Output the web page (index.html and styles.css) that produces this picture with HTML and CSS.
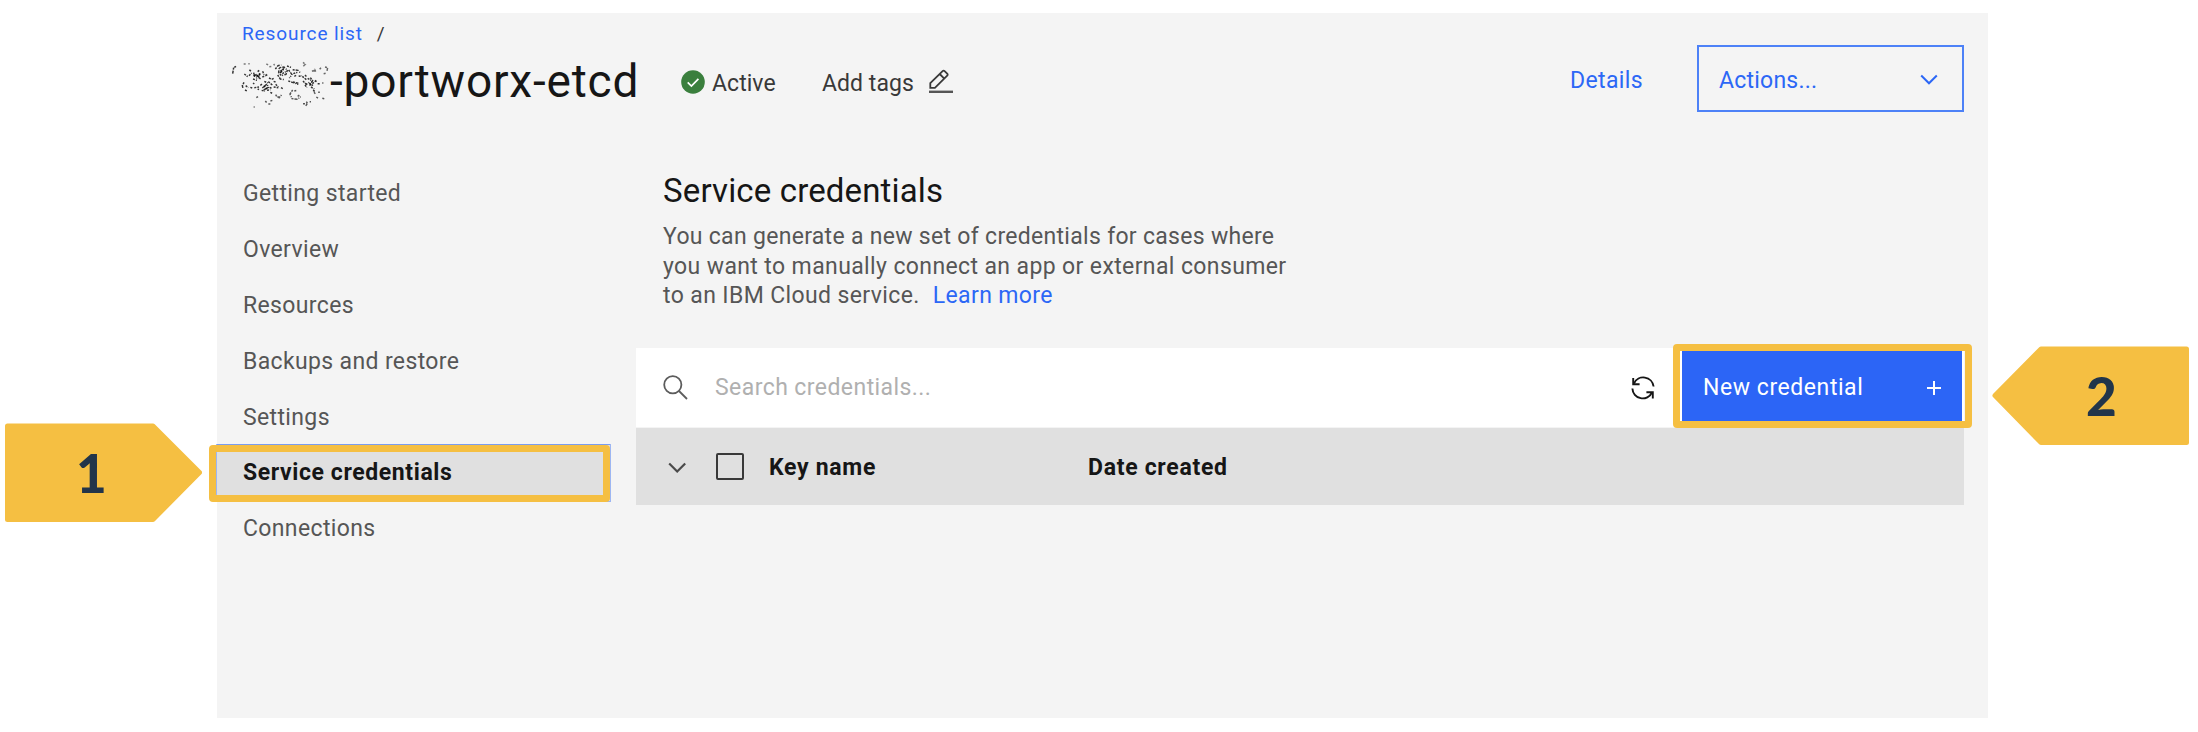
FILE: index.html
```html
<!DOCTYPE html>
<html lang="en">
<head>
<meta charset="utf-8">
<title>Service credentials</title>
<link rel="stylesheet" href="styles.css">
</head>
<body>
<div class="stage">
  <div class="panel">
    <header class="header">
      <nav class="crumbs"><a class="link crumb">Resource list</a><span class="slash">/</span></nav>
      <div class="title-row">
        <svg class="redacted" width="105" height="60" viewBox="0 0 315 180" fill="none" stroke="#333" stroke-width="4.4" stroke-dasharray="6 3 9 4 3 3">
          <path d="M26 38l-3 18M33 34l-6 4" stroke-width="4.5"/>
          <path d="M56 27h8M70 26h4M124 27l6 3M133 35l8-1M146 27l3 4M234 22l7 6l-6 6" stroke="#777"/>
          <path d="M58 57l10 8M72 62l8-8M78 48l-5-3M86 53l2 9l7-4M84 72l12 4M98 50l6-5M104 56l-2 12l8 6M113 49l4 10M112 66l10-4M122 58l6 5M118 79l10 5M132 69l8 4l6-3M130 80l12 10M146 79l8 3M152 88l8 8M146 96l14 2M168 98l6 3"/>
          <path d="M57 82l-5 10l2 8M62 92l8 6M60 105l6 3M76 97l6 2M88 98l14-2M84 84l4 3M106 91l6-4M112 99l14-12l4 10l-14 8M110 106l10 3M126 106l10-2M134 97l8 4M136 112l8 4M98 102l4 2"/>
          <path d="M151 42l8-10l10-2M163 38l14-2l10 10l-4 12l-14 4l-8-10zM158 60l8 12l12 2M166 48l10-4M172 56l10-6M186 33l12 4M191 45l10 14l-8 10M203 44l16 2l8 8M205 56l12-4M208 64l8-4M221 64l10-2M190 78l12 4l18 6M204 81l16 4"/>
          <path d="M232 64l12 10M240 60l6 6M234 78l10 10l8-6M248 70l10 6M256 68l8 10M252 84l12 8M262 86l10-8M270 76l6 5M278 86h6M292 84h3M258 96l10 6M240 90l6 8M264 106l8 4M280 112h4"/>
          <path d="M261 49l8-5l3 6M265 48h4M284 43l6-7M300 36l8 2l-2 10M296 56l8-2" stroke="#666"/>
          <path d="M152 119l4 7h10l4-8M160 126l4 4M203 105l-8 12l6 14l16 2l10-8M208 108l8-2M218 124l6-4M94 128l6-4M121 138l4 5M130 147h9M142 136l-6 2M86 156h3M234 146h10M244 140l4 6l-6 6M254 140h4M274 126l6 4M292 130l8 2M267 112l4 4" stroke="#555"/>
          <path d="M86 60l6 6M102 62l-8 8M176 40l-10 14M262 78l-8 14M116 92l10 10M94 64l12-8" stroke="#111"/>
        </svg>
        <h1 class="title">-portworx-etcd</h1>
        <svg class="ok" width="24" height="24" viewBox="0 0 24 24"><circle cx="12" cy="12" r="11.8" fill="#3a7f3d"/><path d="M6.7 12.3l3.7 3.7 7-7.2" fill="none" stroke="#fff" stroke-width="1.7"/></svg>
        <span class="meta active">Active</span>
        <span class="meta tags">Add tags</span>
        <svg class="pencil" width="25" height="25" viewBox="0 0 25 25" fill="none" stroke="#393939" stroke-width="1.8"><path d="M1 22.8h24" stroke="#555" stroke-width="2.4"/><path d="M2.300 18.800v-4.600L14.600 2.100q1-1 2 0l2.600 2.600q1 1 0 2L6.900 18.800zM11.700 5l4.600 4.600"/></svg>
        <a class="link details">Details</a>
        <button class="actions"><span>Actions...</span><svg width="18" height="12" viewBox="0 0 18 12"><path d="M1.200 1.500L9 9.300l7.800-7.800" fill="none" stroke="#2c67f6" stroke-width="2"/></svg></button>
      </div>
    </header>
    <div class="content">
      <nav class="side">
        <a class="item">Getting started</a>
        <a class="item">Overview</a>
        <a class="item">Resources</a>
        <a class="item">Backups and restore</a>
        <a class="item">Settings</a>
        <a class="item selected">Service credentials</a>
        <a class="item">Connections</a>
      </nav>
      <main class="main">
        <h2 class="heading">Service credentials</h2>
        <p class="desc"><span class="wide">You can generate a new set of credentials for cases where</span><br>you want to manually connect an app or external consumer<br>to an IBM Cloud service. <a class="link more">Learn more</a></p>
        <div class="toolbar">
          <svg class="search-icon" width="25" height="25" viewBox="0 0 25 25" fill="none" stroke="#5c5c5c" stroke-width="1.800"><circle cx="9.800" cy="9.800" r="8.600"/><path d="M16 16l8 8"/></svg>
          <span class="placeholder">Search credentials...</span>
          <svg class="refresh" width="24" height="24" viewBox="0 0 24 24" fill="none" stroke="#161616" stroke-width="1.900"><path d="M22.600 10.500A10.300 10.300 0 0 0 3 7.500M1.400 12.500A10.300 10.300 0 0 0 21 16.500"/><path d="M2.200 2v6.200h6.400M21.800 22.500v-6.200h-6.400"/></svg>
          <button class="new"><span>New credential</span><svg width="14" height="14" viewBox="0 0 14 14"><path d="M7 0v14M0 7h14" stroke="#fff" stroke-width="2"/></svg></button>
        </div>
        <div class="thead">
          <svg class="expand" width="19" height="12" viewBox="0 0 19 12"><path d="M1.200 1.500L9.200 9.500l8-8" fill="none" stroke="#4a4a4a" stroke-width="2.200"/></svg>
          <span class="box"></span>
          <span class="th key">Key name</span>
          <span class="th">Date created</span>
        </div>
      </main>
    </div>
  </div>
  <div class="frame frame-nav"></div>
  <div class="frame frame-new"></div>
  <div class="callout one">
    <svg width="198" height="100" viewBox="0 0 198 100"><path d="M3.500 3H149L195.500 49.500 149 96.500H3.500z" fill="#f5bf42" stroke="#f5bf42" stroke-width="5" stroke-linejoin="round"/></svg>
    <span class="num">1</span>
  </div>
  <div class="callout two">
    <svg width="198" height="100" viewBox="0 0 198 100"><path d="M194.500 3H49L3 49.500 49 96.500H194.500z" fill="#f5bf42" stroke="#f5bf42" stroke-width="5" stroke-linejoin="round"/></svg>
    <span class="num">2</span>
  </div>
</div>
</body>
</html>
```
FILE: styles.css
```css
* { box-sizing: border-box; }
body { margin: 0; background: #fff; font-family: Roboto, "Liberation Sans", sans-serif; font-size: 23px; letter-spacing: .36px; color: #161616; }
h1, h2, p { margin: 0; font-weight: 400; }
svg { display: block; flex: none; }
button { font: inherit; letter-spacing: inherit; margin: 0; border-radius: 0; }
.link { color: #2c67f6; }

.stage { position: relative; width: 2198px; height: 732px; padding: 13px 210px 14px 217px; overflow: hidden; }
.panel { height: 705px; background: #f4f4f4; }

.header { padding-top: 9px; }
.crumbs { height: 23px; padding-left: 25px; display: flex; align-items: center; font-size: 19px; line-height: 23px; }
.crumb { letter-spacing: .9px; }
.slash { margin-left: 14px; color: #393939; }
.title-row { height: 67px; padding: 0 24px 0 8px; display: flex; align-items: center; white-space: nowrap; }
.redacted { margin-top: 13px; }
.title { margin-top: 4px; font-size: 46px; line-height: 54px; letter-spacing: .8px; width: 351px; }
.ok { margin-top: 6px; }
.meta { margin-top: 9px; color: #393939; letter-spacing: .05px; }
.active { margin-left: 7px; width: 110px; }
.tags { width: 106px; }
.pencil { margin-top: 6px; }
.details { margin: 3px 54px 0 auto; }
.actions { width: 267px; height: 67px; border: 2px solid #4d81f7; background: none; color: #2c67f6; display: flex; align-items: center; justify-content: space-between; padding: 3px 24px 0 20px; letter-spacing: .22px; }

.content { display: flex; padding-top: 54px; }
.side { width: 393px; }
.item { display: flex; align-items: center; height: 55.8px; padding-left: 26px; color: #565656; }
.item.selected { position: relative; background: #e0e0e0; color: #161616; font-weight: 700; letter-spacing: .6px; box-shadow: 0 -1px 0 #7a9df0, 0 0 0 1px #9db6f2; }

.main { width: 1328px; margin-left: 26px; padding-top: 5px; }
.heading { padding-left: 27px; font-size: 33px; line-height: 40px; letter-spacing: .15px; }
.desc { padding: 11px 0 0 27px; height: 137px; line-height: 29.6px; letter-spacing: .38px; color: #565656; white-space: nowrap; }
.wide { letter-spacing: .3px; }
.more { margin-left: 7px; }
.toolbar { height: 79px; background: #fff; display: flex; align-items: center; padding: 0 2px 0 27px; }
.search-icon { margin-right: 27px; }
.placeholder { color: #b0b0b0; letter-spacing: .43px; }
.refresh { margin-left: auto; }
.new { width: 280px; height: 74px; margin-left: 27px; border: 0; background: #2c65f6; color: #fff; display: flex; align-items: center; justify-content: space-between; padding: 0 21px; letter-spacing: .56px; }
.thead { height: 77px; margin-top: 1px; background: #e0e0e0; display: flex; align-items: center; }
.expand { margin: 2px 0 0 32px; }
.box { width: 28px; height: 27px; margin: 0 25px 0 29px; border: 2px solid #393939; border-radius: 2px; }
.th { font-weight: 700; letter-spacing: .7px; margin-top: 2px; }
.key { width: 319px; }

.frame { position: absolute; border: 7px solid #f5bf42; border-radius: 4px; }
.frame-nav { left: 209px; top: 445px; width: 401px; height: 57px; }
.frame-new { left: 1673px; top: 344px; width: 299px; height: 84px; }
.callout { position: absolute; width: 198px; height: 100px; }
.one { left: 4px; top: 423px; }
.two { left: 1992px; top: 346px; }
.num { position: absolute; top: 18px; font: 900 53px/64px Lato, sans-serif; letter-spacing: 0; color: #22354a; }
.one .num { left: 72px; }
.two .num { left: 94px; }
```
